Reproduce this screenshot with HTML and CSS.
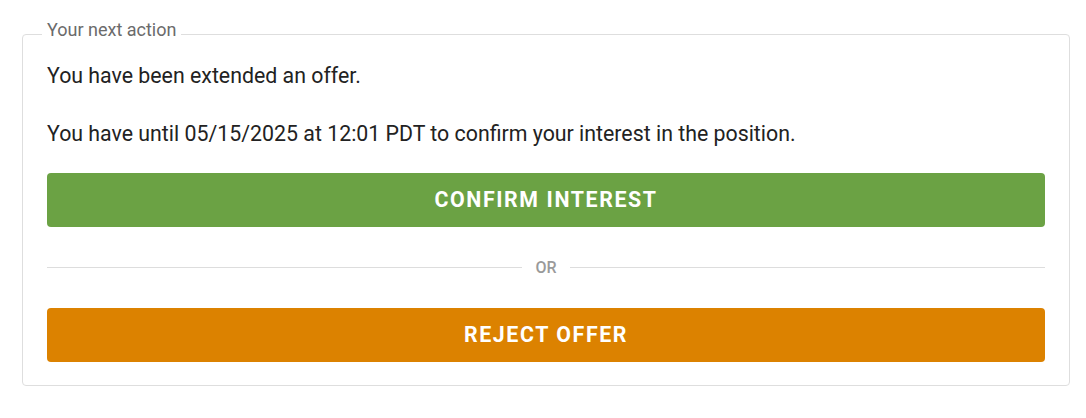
FILE: index.html
```html
<!DOCTYPE html>
<html lang="en">
<head>
<meta charset="utf-8">
<title>Your next action</title>
<link rel="stylesheet" href="styles.css">
</head>
<body>
<div class="page">
  <fieldset class="action">
    <legend class="action-title">Your next action</legend>
    <p class="msg">You have been extended an offer.</p>
    <p class="msg msg-last">You have until 05/15/2025 at 12:01 PDT to confirm your interest in the position.</p>
    <button class="btn btn-confirm" type="button">CONFIRM INTEREST</button>
    <div class="divider"><span class="divider-text">OR</span></div>
    <button class="btn btn-reject" type="button">REJECT OFFER</button>
  </fieldset>
</div>
</body>
</html>
```

FILE: styles.css
```css
html, body {
  margin: 0;
  padding: 0;
  background: #ffffff;
}

body {
  font-family: Roboto, "Liberation Sans", Arial, sans-serif;
  color: #212121;
}

.page {
  padding: 16px 16px 0 22px;
}

.action {
  margin: 0;
  border: 1px solid #dedede;
  border-radius: 4px;
  padding: 7.5px 24px 23px 24px;
  min-width: 0;
}

.action-title {
  margin-left: -5px;
  padding: 2px 5px 10px 5px;
  font-size: 18px;
  line-height: 24px;
  color: #6b6b6b;
}

.msg {
  margin: 0 0 26px 0;
  font-size: 21.33px;
  line-height: 32px;
  color: #222222;
}

.msg-last {
  margin-bottom: 23px;
}

.btn {
  display: block;
  width: 100%;
  height: 54px;
  border: none;
  border-radius: 4px;
  font-family: Roboto, "Liberation Sans", Arial, sans-serif;
  font-size: 21.33px;
  font-weight: 700;
  letter-spacing: 1.6px;
  color: #ffffff;
  cursor: pointer;
}

.btn-confirm {
  background: #6ba244;
}

.btn-reject {
  background: #dc8200;
}

.divider {
  display: flex;
  align-items: center;
  height: 21px;
  margin: 30px 0;
}

.divider::before,
.divider::after {
  content: "";
  flex: 1;
  height: 1px;
  background: #dddddd;
}

.divider-text {
  padding: 0 13px;
  font-size: 16px;
  font-weight: 500;
  color: #9a9a9a;
}
```
